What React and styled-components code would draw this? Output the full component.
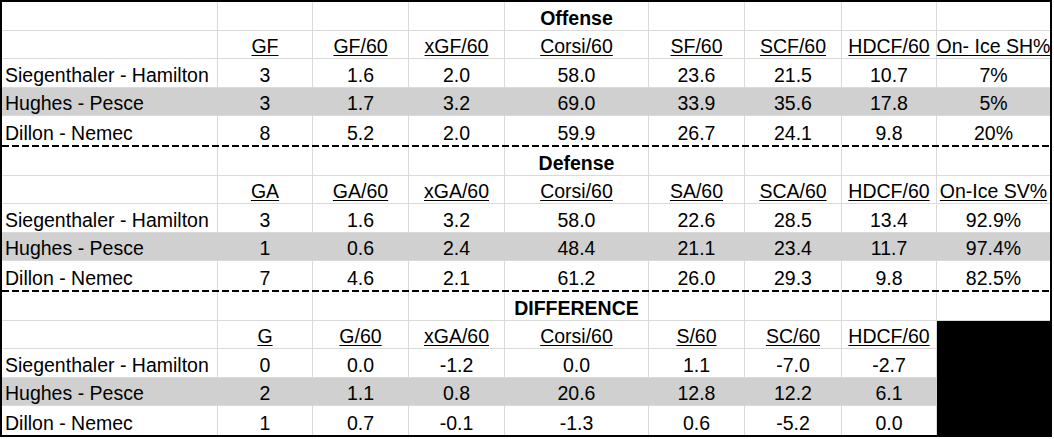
import React from "react";
import styled, { createGlobalStyle } from "styled-components";

const COLORS = {
  grid: "#dadada",
  shade: "#d0d0d0",
  ink: "#000000",
};

const COLUMNS = "216px 95px 96px 96px 144px 96px 97px 95px 113px";

const SECTIONS = [
  {
    title: "Offense",
    headers: ["GF", "GF/60", "xGF/60", "Corsi/60", "SF/60", "SCF/60", "HDCF/60", "On- Ice SH%"],
    rows: [
      ["Siegenthaler - Hamilton", "3", "1.6", "2.0", "58.0", "23.6", "21.5", "10.7", "7%"],
      ["Hughes - Pesce", "3", "1.7", "3.2", "69.0", "33.9", "35.6", "17.8", "5%"],
      ["Dillon - Nemec", "8", "5.2", "2.0", "59.9", "26.7", "24.1", "9.8", "20%"],
    ],
  },
  {
    title: "Defense",
    headers: ["GA", "GA/60", "xGA/60", "Corsi/60", "SA/60", "SCA/60", "HDCF/60", "On-Ice SV%"],
    rows: [
      ["Siegenthaler - Hamilton", "3", "1.6", "3.2", "58.0", "22.6", "28.5", "13.4", "92.9%"],
      ["Hughes - Pesce", "1", "0.6", "2.4", "48.4", "21.1", "23.4", "11.7", "97.4%"],
      ["Dillon - Nemec", "7", "4.6", "2.1", "61.2", "26.0", "29.3", "9.8", "82.5%"],
    ],
  },
  {
    title: "DIFFERENCE",
    headers: ["G", "G/60", "xGA/60", "Corsi/60", "S/60", "SC/60", "HDCF/60", null],
    rows: [
      ["Siegenthaler - Hamilton", "0", "0.0", "-1.2", "0.0", "1.1", "-7.0", "-2.7", null],
      ["Hughes - Pesce", "2", "1.1", "0.8", "20.6", "12.8", "12.2", "6.1", null],
      ["Dillon - Nemec", "1", "0.7", "-0.1", "-1.3", "0.6", "-5.2", "0.0", null],
    ],
  },
];

const GlobalStyle = createGlobalStyle`
  html, body {
    margin: 0;
    padding: 0;
    background: #ffffff;
  }
  body {
    font-family: "Liberation Sans", Arial, sans-serif;
    color: ${COLORS.ink};
  }
`;

const Sheet = styled.div`
  width: 1052px;
  box-sizing: border-box;
  border: 2px solid ${COLORS.ink};
  display: flex;
  flex-direction: column;
`;

const Section = styled.div`
  display: grid;
  grid-template-columns: ${COLUMNS};
  grid-auto-rows: 28.6px;
`;

const Divider = styled.div`
  height: 2px;
  background: repeating-linear-gradient(
    90deg,
    ${COLORS.ink} 0 7px,
    transparent 7px 10px
  );
`;

const Cell = styled.div`
  box-sizing: border-box;
  display: flex;
  align-items: flex-end;
  justify-content: ${(p) => (p.$left ? "flex-start" : "center")};
  padding-left: ${(p) => (p.$left ? "3px" : "0")};
  white-space: nowrap;
  font-size: 19.5px;
  line-height: normal;
  font-weight: ${(p) => (p.$bold ? 700 : 400)};
  text-decoration: ${(p) => (p.$underline ? "underline" : "none")};
  text-decoration-thickness: 1px;
  text-underline-offset: 2px;
  background: ${(p) => (p.$black ? COLORS.ink : p.$shade ? COLORS.shade : "transparent")};
  border-right: 1px solid
    ${(p) => (p.$lastCol ? "transparent" : p.$black ? COLORS.ink : p.$shade ? COLORS.shade : COLORS.grid)};
  border-bottom: 1px solid
    ${(p) => (p.$lastRow ? "transparent" : p.$black ? COLORS.ink : COLORS.grid)};
  ${(p) => p.$lastRow && "border-bottom: none;"}
  ${(p) => p.$lastCol && "border-right: none;"}
`;

const TableSection = ({ title, headers, rows }) => {
  const colCount = 9;
  return (
    <Section>
      {Array.from({ length: colCount }).map((_, c) => (
        <Cell key={"t" + c} $bold $lastCol={c === colCount - 1}>
          {c === 4 ? title : ""}
        </Cell>
      ))}
      <Cell />
      {headers.map((h, i) => (
        <Cell key={"h" + i} $underline={h !== null} $black={h === null} $lastCol={i === headers.length - 1}>
          {h}
        </Cell>
      ))}
      {rows.map((row, r) =>
        row.map((value, c) => (
          <Cell
            key={r + "-" + c}
            $left={c === 0}
            $shade={r === 1}
            $black={value === null}
            $lastCol={c === colCount - 1}
            $lastRow={r === rows.length - 1}
          >
            {value}
          </Cell>
        ))
      )}
    </Section>
  );
};

export default function App() {
  return (
    <>
      <GlobalStyle />
      <Sheet>
        {SECTIONS.map((section, i) => (
          <React.Fragment key={section.title}>
            {i > 0 && <Divider />}
            <TableSection {...section} />
          </React.Fragment>
        ))}
      </Sheet>
    </>
  );
}
